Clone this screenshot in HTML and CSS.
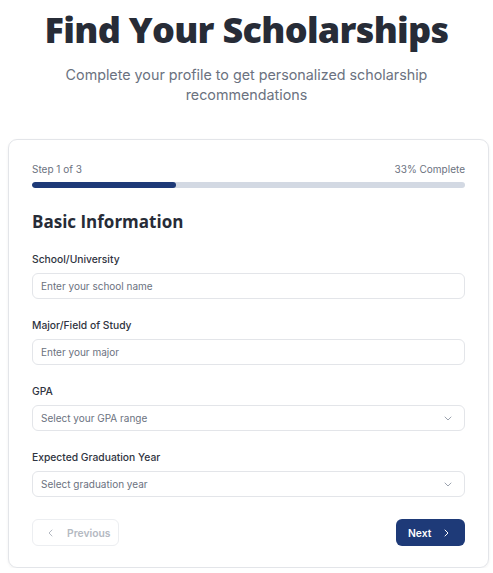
FILE: index.html
```html
<!DOCTYPE html>
<html lang="en">
<head>
<meta charset="utf-8">
<title>Find Your Scholarships</title>
<link rel="stylesheet" href="styles.css">
</head>
<body>
<div class="page">
  <header class="hero">
    <h1 class="hero-title">Find Your Scholarships</h1>
    <p class="hero-sub">Complete your profile to get personalized scholarship recommendations</p>
  </header>
  <section class="card">
    <div class="progress-meta">
      <span>Step 1 of 3</span>
      <span>33% Complete</span>
    </div>
    <div class="progress-track"><div class="progress-fill" style="width:33.3%"></div></div>
    <h2 class="section-title">Basic Information</h2>
    <div class="field">
      <label class="field-label">School/University</label>
      <div class="input"><span class="placeholder">Enter your school name</span></div>
    </div>
    <div class="field">
      <label class="field-label">Major/Field of Study</label>
      <div class="input"><span class="placeholder">Enter your major</span></div>
    </div>
    <div class="field">
      <label class="field-label">GPA</label>
      <div class="input select"><span class="placeholder">Select your GPA range</span>
        <svg class="chev" width="8" height="5" viewBox="0 0 8 5"><path d="M1 1l3 3 3-3" fill="none" stroke="#9ca3af" stroke-width="1" stroke-linecap="round" stroke-linejoin="round"/></svg>
      </div>
    </div>
    <div class="field">
      <label class="field-label">Expected Graduation Year</label>
      <div class="input select"><span class="placeholder">Select graduation year</span>
        <svg class="chev" width="8" height="5" viewBox="0 0 8 5"><path d="M1 1l3 3 3-3" fill="none" stroke="#9ca3af" stroke-width="1" stroke-linecap="round" stroke-linejoin="round"/></svg>
      </div>
    </div>
    <div class="actions">
      <button class="btn btn-prev">
        <svg width="5" height="8" viewBox="0 0 5 8"><path d="M4 1L1 4l3 3" fill="none" stroke="currentColor" stroke-width="1" stroke-linecap="round" stroke-linejoin="round"/></svg>
        <span>Previous</span>
      </button>
      <button class="btn btn-next">
        <span>Next</span>
        <svg width="5" height="8" viewBox="0 0 5 8"><path d="M1 1l3 3-3 3" fill="none" stroke="currentColor" stroke-width="1" stroke-linecap="round" stroke-linejoin="round"/></svg>
      </button>
    </div>
  </section>
</div>
</body>
</html>
```
FILE: styles.css
```css
* { box-sizing: border-box; }
html, body { margin: 0; padding: 0; background: #ffffff; }
body { font-family: Inter, "Noto Sans", sans-serif; color: #1f2937; }

.page {
  display: flex;
  flex-direction: column;
  padding: 0 8px;
}

.hero {
  display: flex;
  flex-direction: column;
  align-items: center;
  text-align: center;
}
.hero-title {
  margin: 7px 0 0;
  font-family: "Open Sans", Inter, sans-serif;
  font-weight: 800;
  font-size: 36px;
  line-height: 46px;
  color: #272c37;
  letter-spacing: -0.7px;
}
.hero-sub {
  margin: 12px 0 0;
  max-width: 380px;
  font-size: 14.3px;
  line-height: 19.5px;
  color: #6b7280;
}

.card {
  width: 481px;
  margin-top: 35px;
  border: 1px solid #e3e5e9;
  border-radius: 9px;
  box-shadow: 0 1px 3px rgba(0,0,0,0.06);
  padding: 21px 23px 21px;
  display: flex;
  flex-direction: column;
}

.progress-meta {
  display: flex;
  justify-content: space-between;
  font-size: 10px;
  line-height: 16px;
  color: #6b7280;
}
.progress-track {
  margin-top: 5px;
  height: 6px;
  border-radius: 3px;
  background: #d3d9e3;
  overflow: hidden;
}
.progress-fill {
  height: 100%;
  background: #1e3a78;
  border-radius: 3px;
}

.section-title {
  margin: 20px 0 0;
  font-family: "Open Sans", Inter, sans-serif;
  font-weight: 700;
  font-size: 17px;
  line-height: 28px;
  color: #272c37;
}

.field {
  display: flex;
  flex-direction: column;
  gap: 6px;
  margin-top: 15px;
}
.field + .field { margin-top: 18px; }
.field-label {
  font-size: 10.3px;
  font-weight: 500;
  line-height: 16px;
  color: #2f3441;
}
.input {
  height: 26px;
  border: 1px solid #e3e5e9;
  border-radius: 6px;
  display: flex;
  align-items: center;
  justify-content: space-between;
  padding: 0 12px 0 8px;
  font-size: 10px;
}
.placeholder { color: #6b7280; }
.chev { display: block; }

.actions {
  margin-top: 22px;
  display: flex;
  justify-content: space-between;
}
.btn {
  height: 27px;
  border-radius: 6px;
  display: flex;
  align-items: center;
  font-family: Inter, sans-serif;
  font-size: 10.3px;
  font-weight: 600;
  padding: 0;
}
.btn-prev {
  width: 87px;
  border: 1px solid #eceef1;
  background: #fff;
  color: #b4b9c2;
  padding-left: 15px;
  gap: 14px;
}
.btn-next {
  width: 69px;
  border: none;
  background: #1e3a78;
  color: #fff;
  padding-left: 12px;
  gap: 13px;
}
```
